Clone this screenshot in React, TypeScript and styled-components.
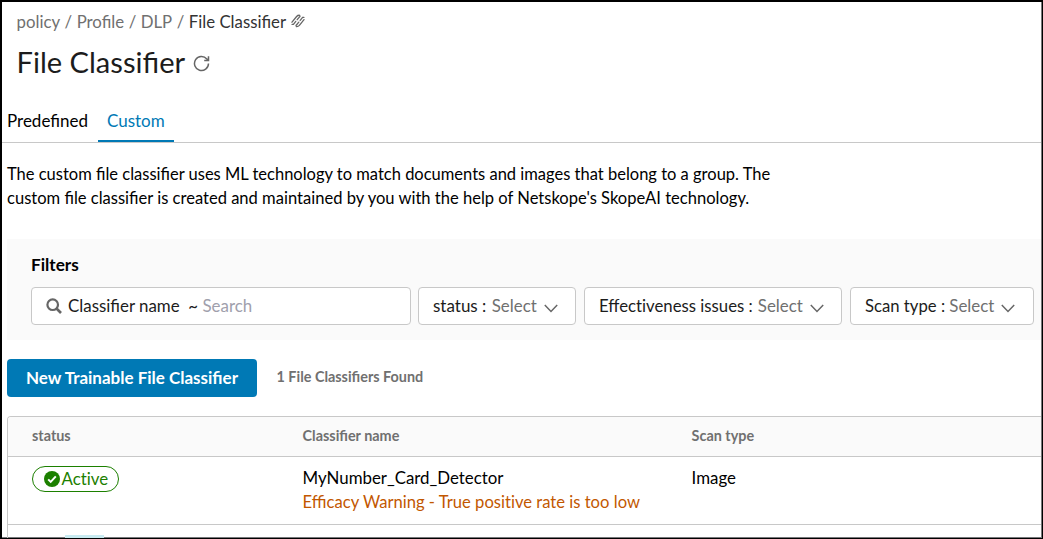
import React from 'react';
import styled, { createGlobalStyle } from 'styled-components';

const GlobalStyle = createGlobalStyle`
  * { box-sizing: border-box; }
  body {
    margin: 0;
    background: #fff;
    color: #000;
    font: 400 16.5px/24px Lato, "Liberation Sans", sans-serif;
  }
`;

const Frame = styled.div`
  width: 1043px;
  height: 539px;
  overflow: hidden;
  display: flex;
  flex-direction: column;
  border: 2px solid #000;
  border-right-width: 1px;
  border-bottom-width: 1px;
  box-shadow: inset -1px -1px 0 #77777a;
  padding: 0 1px 1px 0;
`;

const Breadcrumb = styled.nav`
  display: flex;
  flex: none;
  align-items: center;
  height: 24px;
  margin: 8px 0 0 14.5px;
  gap: 4.5px;
  color: #707070;
  font-size: 16.8px;
`;

const Current = styled.span`
  color: #333;
`;

const LinkIcon = styled.svg`
  flex: none;
  margin: -3px 0 0 .5px;
`;

const TitleRow = styled.header`
  display: flex;
  flex: none;
  align-items: center;
  height: 40px;
  margin: 9px 0 0 14.5px;
  gap: 8px;
`;

const Title = styled.h1`
  margin: -3px 0 0;
  font-size: 29.1px;
  line-height: 40px;
  font-weight: 400;
  color: #1c1c1c;
`;

const Tabs = styled.div`
  display: flex;
  flex: none;
  height: 34px;
  margin-top: 26px;
  border-bottom: 1px solid #c8c8c8;
  font-size: 17px;
`;

const Tab = styled.div<{ $active?: boolean; $width: number; $pad: number }>`
  width: ${p => p.$width}px;
  height: 33px;
  padding: 0 0 0 ${p => p.$pad}px;
  color: ${p => (p.$active ? '#0079b5' : '#000')};
  border-bottom: 2px solid ${p => (p.$active ? '#0079b5' : 'transparent')};
`;

const Description = styled.p`
  flex: none;
  margin: 19px 0 0 5px;
  width: 790px;
`;

const SecondLine = styled.span`
  font-size: 16.56px;
`;

const NoLigature = styled.span`
  font-variant-ligatures: none;
`;

const Filters = styled.section`
  flex: none;
  height: 101px;
  margin: 29px 0 0 5px;
  padding: 14px 0 0 24px;
  background: #fafafa;
`;

const FiltersTitle = styled.div`
  font-size: 17.2px;
  font-weight: 700;
`;

const FilterRow = styled.div`
  display: flex;
  margin-top: 10px;
`;

const Field = styled.div<{ $width: number; $gap?: number; $size?: number }>`
  flex: none;
  display: flex;
  align-items: center;
  width: ${p => p.$width}px;
  height: 38px;
  margin-right: ${p => p.$gap ?? 8}px;
  padding: 0 14px;
  border: 1px solid #c8c8c8;
  border-radius: 4px;
  background: #fff;
  color: #1c1c1c;
  font-size: ${p => p.$size ?? 16.5}px;
  white-space: pre;
`;

const Muted = styled.span<{ $shift: number }>`
  margin-left: ${p => p.$shift}px;
  color: #707070;
  font-size: 16.9px;
`;

const Placeholder = styled.span`
  color: #a0a0ac;
`;

const SearchIcon = styled.svg`
  flex: none;
  margin-right: 6px;
`;

const ChevronIcon = styled.svg`
  flex: none;
  margin: 4px 0 0 7px;
`;

const Actions = styled.div`
  display: flex;
  flex: none;
  align-items: center;
  margin: 19px 0 0 5px;
  gap: 19.5px;
`;

const Primary = styled.button`
  width: 250px;
  height: 38px;
  padding: 0;
  border: 0;
  border-radius: 4px;
  background: #0079b5;
  color: #fff;
  font: inherit;
  font-size: 17px;
  font-weight: 700;
`;

const Count = styled.span`
  margin-top: -2px;
  font-size: 14.4px;
  font-weight: 700;
  color: #707070;
`;

const Table = styled.div`
  flex: none;
  height: 140px;
  margin: 19px 0 0 5px;
  border: 1px solid #c8c8c8;
  border-right: 0;
  border-radius: 4px 0 0 0;
`;

const Row = styled.div<{ $height: number; $head?: boolean }>`
  display: grid;
  grid-template-columns: 270.6px 389px 1fr;
  height: ${p => p.$height}px;
  padding: ${p => (p.$head ? '7px' : '9px')} 0 0 24px;
  border-bottom: 1px solid #c8c8c8;
  font-size: 16.85px;
  ${p => p.$head && 'background: #fafafa; color: #707070; font-size: 14.4px; font-weight: 700; border-radius: 3px 0 0 0;'}
`;

const Badge = styled.span`
  display: flex;
  align-items: center;
  width: 87px;
  height: 26px;
  padding-left: 10.5px;
  gap: 2px;
  border: 1px solid #1c8000;
  border-radius: 13px;
  color: #1c8000;
  font-variant-ligatures: none;
`;

const Warning = styled.div`
  color: #c25700;
  font-size: 16.62px;
`;

const NextBadge = styled.span`
  width: 39px;
  height: 20px;
  margin: 1px 0 0 33px;
  background: #c8eaf0;
`;

const Chevron = () => (
  <ChevronIcon width="14" height="9" viewBox="0 0 14 9" fill="none" stroke="#666" strokeWidth="1.5">
    <path d="M.8 1 7 7.4 13.2 1" />
  </ChevronIcon>
);

const selects = [
  { label: 'status', width: 158, size: 17, shift: 1 },
  { label: <>Effec<NoLigature>tiveness issues</NoLigature></>, width: 258, size: 16.75, shift: 0.8 },
  { label: 'Scan type', width: 184, size: 16.7, shift: 0 },
];

export default function App() {
  return (
    <>
      <GlobalStyle />
      <Frame>
        <Breadcrumb>
          <span>policy</span><span>/</span><span>Profile</span><span>/</span><span>DLP</span><span>/</span>
          <Current>File Classifier</Current>
          <LinkIcon width="14" height="14" viewBox="0 0 14 14" fill="none" stroke="#666" strokeWidth="1.3" strokeLinecap="round">
            <path d="M1 8.2 5.6 2.5Q6.9 1.1 8.7 1.3" />
            <path d="M1.1 10.4 2.4 10.4 4.8 7.4M6.2 5.7 9 2.3" />
            <path d="M5 11.5 7.8 8.1M9.2 6.4 11.6 3.4 12.9 3.4" />
            <path d="M5.3 12.6Q7.1 12.8 8.4 11.4L13 5.6" />
          </LinkIcon>
        </Breadcrumb>
        <TitleRow>
          <Title>File Classifier</Title>
          <svg width="17" height="17" viewBox="0 0 17 17" fill="none" stroke="#666" strokeWidth="1.5">
            <path d="M15.5 8.5A7 7 0 1 1 13.8 3.9L15.3 5.4" />
            <path d="M15.5 1.3V5.6H11.2" />
          </svg>
        </TitleRow>
        <Tabs>
          <Tab $width={96} $pad={5}>Predefined</Tab>
          <Tab $active $width={76} $pad={9}>Custom</Tab>
        </Tabs>
        <Description>
          The custom file classifier uses ML technology to match documents and images that belong to a group. The
          <br />
          <SecondLine>custom file classifier is created and maintained by you with the help of Netskope's SkopeAI technology.</SecondLine>
        </Description>
        <Filters>
          <FiltersTitle>Filters</FiltersTitle>
          <FilterRow>
            <Field $width={380} $gap={7} $size={16.9}>
              <SearchIcon width="16" height="16" viewBox="0 0 16 16" fill="none" stroke="#666" strokeWidth="2.2">
                <circle cx="6.7" cy="6.7" r="5.3" />
                <path d="m10.5 10.5 4.5 4.5" strokeWidth="2.6" />
              </SearchIcon>
              Classifier name{'  '}~ <Placeholder>Search</Placeholder>
            </Field>
            {selects.map(s => (
              <Field key={s.width} $width={s.width} $size={s.size}>
                <span>{s.label} : <Muted $shift={s.shift}>Select</Muted></span>
                <Chevron />
              </Field>
            ))}
          </FilterRow>
        </Filters>
        <Actions>
          <Primary>New Trainable File Classifier</Primary>
          <Count>1 File Classifiers Found</Count>
        </Actions>
        <Table>
          <Row $head $height={40}>
            <span>status</span><span>Classifier name</span><span>Scan type</span>
          </Row>
          <Row $height={68}>
            <Badge>
              <svg width="16" height="16" viewBox="0 0 16 16" fill="none">
                <circle cx="8" cy="8" r="8" fill="#1c8000" />
                <path d="m4.2 8.4 2.5 2.5 5.1-5.5" stroke="#fff" strokeWidth="2" />
              </svg>
              Active
            </Badge>
            <div>
              MyNumber_Card_Detector
              <Warning>Efficacy Warning - True <NoLigature>positive</NoLigature> rate is too low</Warning>
            </div>
            <span>Image</span>
          </Row>
          <Row $height={40}>
            <NextBadge />
          </Row>
        </Table>
      </Frame>
    </>
  );
}
